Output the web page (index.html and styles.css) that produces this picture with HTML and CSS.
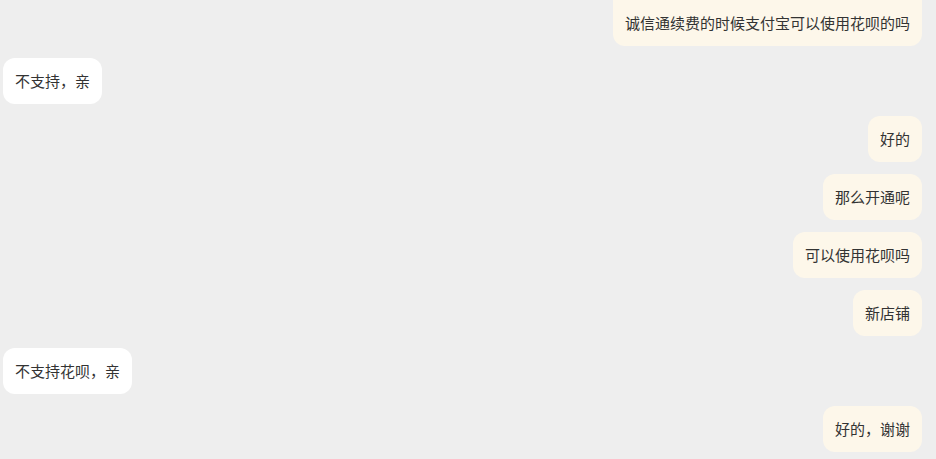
FILE: index.html
```html
<!DOCTYPE html>
<html lang="zh">
<head>
    <meta charset="utf-8">
    <title>聊天记录</title>
    <link rel="stylesheet" href="styles.css">
</head>
<body>
    <div class="chat-list">
      <div class="msg mine first">诚信通续费的时候支付宝可以使用花呗的吗</div>
      <div class="msg other">不支持，亲</div>
      <div class="msg mine">好的</div>
      <div class="msg mine">那么开通呢</div>
      <div class="msg mine">可以使用花呗吗</div>
      <div class="msg mine">新店铺</div>
      <div class="msg other">不支持花呗，亲</div>
      <div class="msg mine">好的，谢谢</div>
    </div>
</body>
</html>
```

FILE: styles.css
```css
body {
  margin: 0;
  background-color: #eeeeee;
  font-family: "Noto Sans CJK SC", "Noto Sans", sans-serif;
  font-size: 15px;
  color: #333333;
}

.chat-list {
  display: flex;
  flex-direction: column;
  gap: 12px;
  padding: 0 14px 0 3px;
}

.msg {
  padding: 12px;
  line-height: 22px;
  border-radius: 12px;
  white-space: nowrap;
}

.msg.mine {
  align-self: flex-end;
  background-color: #fdf7ea;
}

.msg.other {
  align-self: flex-start;
  background-color: #ffffff;
}

.msg.first {
  border-top-left-radius: 0;
  border-top-right-radius: 0;
}
```
